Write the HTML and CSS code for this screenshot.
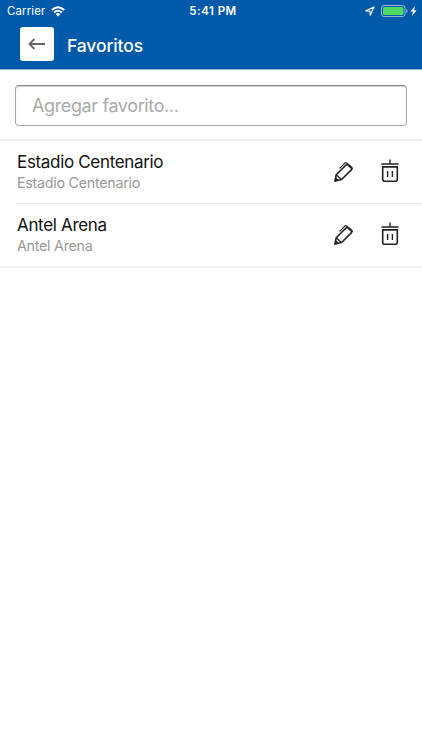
FILE: index.html
```html
<!DOCTYPE html>
<html lang="es">
<head>
<meta charset="utf-8">
<title>Favoritos</title>
<link rel="stylesheet" href="styles.css">
</head>
<body>
<header class="header">
  <div class="status">
    <div class="network"><span class="carrier">Carrier</span>
      <svg class="wifi" viewBox="0 0 14 11"><g fill="none" stroke="currentColor" stroke-width="2"><path d="M.8 4.1Q7-1.6 13.2 4.1M3.1 6.6Q7 3 10.9 6.6"/></g><path d="M4.6 8.1Q7 6 9.4 8.1L7 10.6z" fill="currentColor"/></svg>
    </div>
    <span class="time">5:41 PM</span>
    <div class="power">
      <svg class="location" viewBox="0 0 10 10"><path d="M.8 4.8 9 1 5.2 9.2 4.9 5.1z" fill="none" stroke="currentColor" stroke-width="1.2" stroke-linejoin="round"/></svg>
      <svg class="battery" viewBox="0 0 27 12"><rect x=".5" y=".5" width="23.5" height="11" rx="2.5" fill="none" stroke="#91b5d9"/><rect x="2" y="2" width="20.5" height="8" rx="1" fill="#4cd964"/><path d="M25.2 4v4q1.4-.6 1.4-2t-1.4-2" fill="#91b5d9"/></svg>
      <svg class="bolt" viewBox="0 0 6 9"><path d="M4.4 0 .2 5h2.3L1.6 9 5.8 3.8H3.5z" fill="currentColor"/></svg>
    </div>
  </div>
  <div class="navbar">
    <button class="back" aria-label="Volver"><svg viewBox="0 0 18 12"><path d="M17 6H1.5M6.4 1 1.4 6l5 5" fill="none" stroke="#666" stroke-width="1.8"/></svg></button>
    <h1 class="heading">Favoritos</h1>
  </div>
</header>
<main>
  <div class="add"><input class="field" type="text" placeholder="Agregar favorito..."></div>
  <ul class="list">
    <li class="item">
      <div class="place"><div class="name">Estadio Centenario</div><div class="address">Estadio Centenario</div></div>
      <svg class="pencil" viewBox="0 0 22 22"><g fill="none" stroke="#222" stroke-width="1.6" stroke-linejoin="round"><path d="M2 20 3.2 13.7 13 4q1-.9 2 0l3.2 2.9q1 .9.1 2L8.6 18.5z"/><path d="M3.2 13.7l5.3 4.8M6.6 7.4l5.2-5.3q.9-.8 1.8-.1l5.4 4.6q.7.7 0 1.6" stroke-width="1.3"/></g><path d="M1.3 20.7 2.4 15.8l3.8 3.6z" fill="#222"/></svg>
      <svg class="trash" viewBox="0 0 18 24"><g fill="none" stroke="#222"><path d="M.5 5h17M9 .6V5" stroke-width="1.4"/><path d="M1.7 7.9h14.6v12.4q0 2-2 2H3.7q-2 0-2-2z" stroke-width="1.6"/><path d="M6.6 12v6M11.4 12v6" stroke-width="1.4"/></g></svg>
    </li>
    <li class="item">
      <div class="place"><div class="name">Antel Arena</div><div class="address">Antel Arena</div></div>
      <svg class="pencil" viewBox="0 0 22 22"><g fill="none" stroke="#222" stroke-width="1.6" stroke-linejoin="round"><path d="M2 20 3.2 13.7 13 4q1-.9 2 0l3.2 2.9q1 .9.1 2L8.6 18.5z"/><path d="M3.2 13.7l5.3 4.8M6.6 7.4l5.2-5.3q.9-.8 1.8-.1l5.4 4.6q.7.7 0 1.6" stroke-width="1.3"/></g><path d="M1.3 20.7 2.4 15.8l3.8 3.6z" fill="#222"/></svg>
      <svg class="trash" viewBox="0 0 18 24"><g fill="none" stroke="#222"><path d="M.5 5h17M9 .6V5" stroke-width="1.4"/><path d="M1.7 7.9h14.6v12.4q0 2-2 2H3.7q-2 0-2-2z" stroke-width="1.6"/><path d="M6.6 12v6M11.4 12v6" stroke-width="1.4"/></g></svg>
    </li>
  </ul>
</main>
</body>
</html>
```
FILE: styles.css
```css
* { box-sizing: border-box; }
body { margin: 0; background: #fff; font-family: Inter, "Liberation Sans", sans-serif; }
.header { height: 70px; background: #005aa9; color: #fff; border-bottom: 1px solid #8fb4d8; }
.status { display: grid; grid-template-columns: 1fr auto 1fr; align-items: center; height: 22px; padding: 0 5px 0 7px; font-size: 11.5px; }
.network, .power { display: flex; align-items: center; }
.network { gap: 6px; }
.carrier { letter-spacing: .1px; }
.wifi { width: 14px; height: 11px; }
.time { font-weight: 600; font-size: 11.5px; letter-spacing: .48px; margin-left: 2px; }
.power { justify-content: flex-end; }
.location { width: 10px; height: 10px; margin-right: 6px; }
.battery { width: 27px; height: 12px; margin-right: 2px; }
.bolt { width: 7px; height: 10px; }
.navbar { display: flex; align-items: center; height: 44px; padding-left: 20px; }
.back { display: grid; place-items: center; width: 34px; height: 34px; padding: 0; border: 0; border-radius: 3px; background: #fff; }
.back svg { width: 18px; height: 12px; }
.heading { margin: 3px 0 0 13px; font-size: 17.5px; line-height: 24px; font-weight: 500; letter-spacing: -.12px; }
.add { height: 71px; padding: 15px 15px 0; border-bottom: 2px solid #efefef; }
.field { display: block; width: 100%; height: 41px; padding: 0 16px; border: 1px solid #aaa; border-top-color: #888; border-radius: 4px; background: #fff; box-shadow: inset 0 1px 1px #ccc; font: 18px Inter, "Liberation Sans", sans-serif; letter-spacing: -.38px; }
.field::placeholder { color: #aaa; opacity: 1; }
.list { margin: 0; padding: 0 0 0 16px; list-style: none; border-bottom: 2px solid #f0f0f0; }
.item { display: flex; align-items: center; height: 62px; padding: 0 23px 0 1px; }
.item:first-child { height: 63px; border-bottom: 1px solid #e4e4e4; }
.place { flex: 1; }
.name { font-size: 17px; line-height: 22px; letter-spacing: -.33px; color: #111; }
.address { font-size: 14.3px; line-height: 20px; letter-spacing: -.27px; color: #999; }
.pencil { width: 22px; height: 22px; margin-right: 26px; }
.trash { width: 18px; height: 24px; margin-bottom: 3px; }
```
